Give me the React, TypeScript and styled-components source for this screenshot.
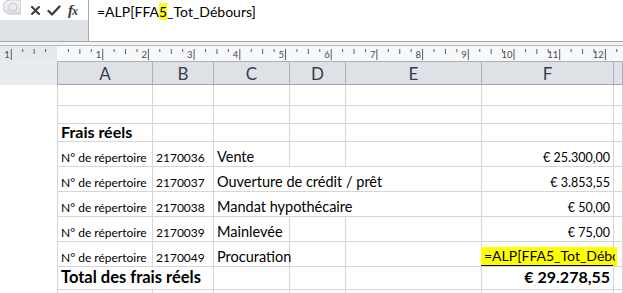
import styled, { createGlobalStyle } from 'styled-components';

const GlobalStyle = createGlobalStyle`
  html, body {
    margin: 0;
    padding: 0;
    background: #ffffff;
  }
  body {
    width: 623px;
    height: 293px;
    overflow: hidden;
    font-family: Lato, "Liberation Sans", sans-serif;
    color: #000;
  }
`;

const Page = styled.div`
  width: 623px;
  height: 293px;
  overflow: hidden;
  display: flex;
  flex-direction: column;
  & > * {
    flex: none;
  }
`;

/* ---------- formula bar ---------- */

const FormulaBar = styled.div`
  height: 41px;
  display: flex;
  border-bottom: 1px solid #a3a3a3;
`;

const Controls = styled.div`
  width: 88px;
  display: flex;
  flex-direction: column;
  border-right: 1px solid #a8a8a8;
`;

const ControlsTop = styled.div`
  height: 20px;
  display: flex;
  align-items: center;
  background: #ffffff;
`;

const ControlsBottom = styled.div`
  flex: 1;
  background: #dfe3e8;
`;

const Knob = styled.svg`
  margin-left: 3px;
  align-self: flex-start;
`;

const IconBtn = styled.span<{ $ml: number }>`
  margin-left: ${(p) => p.$ml}px;
  display: flex;
  align-items: center;
  color: #3a3a3a;
`;

const Fx = styled.span`
  margin-left: 7px;
  font-family: "Liberation Serif", serif;
  font-style: italic;
  font-weight: 700;
  font-size: 15px;
  color: #3a3a3a;
  letter-spacing: -1px;
  line-height: 1;
  small {
    font-size: 12px;
  }
`;

const FormulaInput = styled.div`
  flex: 1;
  padding: 4px 0 0 8px;
  font-size: 14px;
  line-height: 16px;
  background: #fff;
`;

const Mark = styled.span`
  background: #ffff00;
`;

const Gap = styled.div`
  height: 3px;
  background: #f4f4f4;
  border-bottom: 1px solid #b8b8b8;
`;

/* ---------- ruler ---------- */

const RulerSvg = styled.svg`
  display: block;
`;

const UNIT = 45.7;
const ORIGIN = 57;

function Ruler() {
  const ticks = [];
  for (let k = -5; k <= 49; k++) {
    const x = ORIGIN + (k * UNIT) / 4;
    if (x < 0 || x > 623 || k === 0) continue;
    const major = k % 4 === 0;
    const half = k % 2 === 0;
    const y2 = major ? 14 : half ? 8 : 6;
    ticks.push(
      <line key={'t' + k} x1={x} x2={x} y1={3} y2={y2} stroke="#5a5a5a" strokeWidth={1} />
    );
    if (major) {
      ticks.push(
        <text key={'n' + k} x={x - 1.5} y={11.5} fontSize={9.5} textAnchor="end" fill="#4a4a4a" fontFamily="Lato, sans-serif">
          {Math.abs(k / 4)}
        </text>
      );
    }
  }
  return (
    <RulerSvg width={623} height={15} viewBox="0 0 623 15">
      <rect x={0} y={0} width={57} height={15} fill="#e6e9ed" />
      <rect x={57} y={0} width={566} height={15} fill="#f7f8f9" />
      {ticks}
    </RulerSvg>
  );
}

/* ---------- sheet ---------- */

const COLS = '58px 95px 61px 76px 56px 136px 132px 1fr';

const SheetRow = styled.div<{ $h: number }>`
  display: grid;
  grid-template-columns: ${COLS};
  height: ${(p) => p.$h}px;
`;

const HeadCorner = styled.div`
  background: #e8ebef;
  border-right: 1px solid #a9afb6;
`;

const HeadCell = styled.div`
  background: #dee2e7;
  border-top: 1px solid #aab0b7;
  border-bottom: 1px solid #9fa5ac;
  border-right: 1px solid #aab0b7;
  display: flex;
  align-items: center;
  justify-content: center;
  font-size: 17px;
  color: #34404d;
`;

const Margin = styled.div`
  border-right: 1px solid #d6d6d6;
`;

const Cell = styled.div<{
  $span?: number;
  $right?: boolean;
  $size?: number;
  $bold?: boolean;
  $pb?: number;
}>`
  grid-column: span ${(p) => p.$span ?? 1};
  position: relative;
  border-right: 1px solid #d6d6d6;
  border-bottom: 1px solid #d6d6d6;
  display: flex;
  align-items: flex-end;
  justify-content: ${(p) => (p.$right ? 'flex-end' : 'flex-start')};
  padding: 0 3px ${(p) => p.$pb ?? 2}px 3px;
  box-sizing: border-box;
  font-size: ${(p) => p.$size ?? 12}px;
  font-weight: ${(p) => (p.$bold ? 700 : 400)};
  line-height: 1;
  white-space: nowrap;
`;

const EditBox = styled.div`
  position: absolute;
  left: -1px;
  right: -4px;
  top: 5px;
  bottom: 0;
  z-index: 1;
  background: #ffff00;
  font-size: 14px;
  line-height: 1;
  padding: 2px 0 0 3px;
  box-sizing: border-box;
  overflow: hidden;
  white-space: nowrap;
  &::after {
    content: '';
    position: absolute;
    left: 0;
    right: 4px;
    bottom: 0;
    height: 1px;
    background: #000;
  }
`;

const EditClip = styled.div`
  width: 131px;
  overflow: hidden;
`;

type Item = { num: string; label: string; amount: string; span?: number };

const items: Item[] = [
  { num: '2170036', label: 'Vente', amount: '€ 25.300,00' },
  { num: '2170037', label: 'Ouverture de crédit / prêt', amount: '€ 3.853,55', span: 3 },
  { num: '2170038', label: 'Mandat hypothécaire', amount: '€ 50,00', span: 3 },
  { num: '2170039', label: 'Mainlevée', amount: '€ 75,00' },
  { num: '2170049', label: 'Procuration', amount: '' },
];

function Blank({ n }: { n: number }) {
  return (
    <>
      {Array.from({ length: n }).map((_, i) => (
        <Cell key={i} />
      ))}
    </>
  );
}

export default function App() {
  return (
    <Page>
      <GlobalStyle />
      <FormulaBar>
        <Controls>
          <ControlsTop>
            <Knob width={18} height={15} viewBox="0 0 18 15">
              <defs>
                <linearGradient id="kg" x1="0" y1="0" x2="0" y2="1">
                  <stop offset="0" stopColor="#f4f5f7" />
                  <stop offset="1" stopColor="#d9dde2" />
                </linearGradient>
              </defs>
              <path d="M18 0 H7 A7 7 0 0 0 7 14 H18 Z" fill="url(#kg)" stroke="#c3c7cc" />
              <circle cx={10} cy={7} r={4} fill="#e9ebee" stroke="#c9ccd1" />
            </Knob>
            <IconBtn $ml={10}>
              <svg width={9} height={9} viewBox="0 0 9 9">
                <path d="M1 1 L8 8 M8 1 L1 8" stroke="#3a3a3a" strokeWidth={2} strokeLinecap="round" />
              </svg>
            </IconBtn>
            <IconBtn $ml={7}>
              <svg width={14} height={11} viewBox="0 0 14 11">
                <path d="M1.5 6 L5 9.5 L12.5 1.5" stroke="#3a3a3a" strokeWidth={2.3} fill="none" strokeLinecap="round" strokeLinejoin="round" />
              </svg>
            </IconBtn>
            <Fx>
              f<small>x</small>
            </Fx>
          </ControlsTop>
          <ControlsBottom />
        </Controls>
        <FormulaInput>
          =ALP[FFA<Mark>5</Mark>_Tot_Débours]
        </FormulaInput>
      </FormulaBar>
      <Gap />
      <Ruler />

      <SheetRow $h={24}>
        <HeadCorner />
        {['A', 'B', 'C', 'D', 'E', 'F', ''].map((c) => (
          <HeadCell key={c}>{c}</HeadCell>
        ))}
      </SheetRow>

      <SheetRow $h={21}>
        <Margin />
        <Blank n={7} />
      </SheetRow>
      <SheetRow $h={18}>
        <Margin />
        <Blank n={7} />
      </SheetRow>
      <SheetRow $h={18}>
        <Margin />
        <Cell $size={16} $bold $pb={1}>
          Frais réels
        </Cell>
        <Blank n={6} />
      </SheetRow>

      {items.map((it) => (
        <SheetRow $h={25} key={it.num}>
          <Margin />
          <Cell>N° de répertoire</Cell>
          <Cell>{it.num}</Cell>
          <Cell $span={it.span} $size={14.5}>
            {it.label}
          </Cell>
          <Blank n={it.span ? 0 : 2} />
          <Cell $right $size={12.5}>
            {it.amount}
            {it.label === 'Procuration' && (
              <EditBox>
                <EditClip>=ALP[FFA5_Tot_Débours]</EditClip>
              </EditBox>
            )}
          </Cell>
          <Cell />
        </SheetRow>
      ))}

      <SheetRow $h={23}>
        <Margin />
        <Cell $span={2} $size={16.5} $bold $pb={4}>
          Total des frais réels
        </Cell>
        <Blank n={3} />
        <Cell $right $size={16} $bold $pb={4}>
          € 29.278,55
        </Cell>
        <Cell />
      </SheetRow>
      <SheetRow $h={20}>
        <Margin />
        <Blank n={7} />
      </SheetRow>
    </Page>
  );
}
